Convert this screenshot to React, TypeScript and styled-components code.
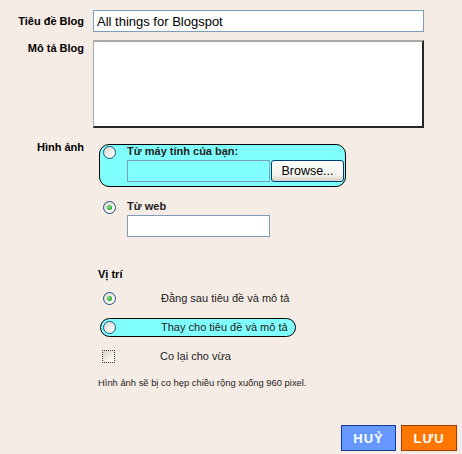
import React from "react";
import styled, { createGlobalStyle } from "styled-components";

const GlobalStyle = createGlobalStyle`
  html, body {
    margin: 0;
    padding: 0;
    background: #f6ece6;
  }
  body {
    font-family: "Liberation Sans", Arial, sans-serif;
    color: #000;
  }
`;

const Page = styled.div`
  width: 462px;
  height: 454px;
  box-sizing: border-box;
  padding-top: 10px;
  display: flex;
  flex-direction: column;
`;

const FieldRow = styled.div<{ $top?: number }>`
  display: flex;
  align-items: ${({ $top }) => ($top !== undefined ? "flex-start" : "center")};
  margin-top: ${({ $top }) => ($top !== undefined ? `${$top}px` : "0")};
`;

const Label = styled.div<{ $offset?: number }>`
  width: 84px;
  flex-shrink: 0;
  margin-right: 9px;
  text-align: right;
  font-size: 11px;
  line-height: 13px;
  font-weight: 700;
  margin-top: ${({ $offset }) => $offset || 0}px;
`;

const TitleInput = styled.input`
  width: 331px;
  height: 22px;
  box-sizing: border-box;
  border: 1px solid #7f9db9;
  padding: 0 3px;
  font-family: "Liberation Sans", Arial, sans-serif;
  font-size: 13px;
  color: #000;
  outline: none;
  background: #fff;
`;

const DescArea = styled.textarea`
  width: 331px;
  height: 88px;
  box-sizing: border-box;
  border-style: solid;
  border-width: 2px 2px 2px 1px;
  border-color: #aca8a4 #262626 #262626 #aca8a4;
  resize: none;
  outline: none;
  background: #fff;
  margin: 0;
`;

const Options = styled.div`
  padding-left: 6px;
  margin-top: 3px;
  display: flex;
  flex-direction: column;
`;

const FileBox = styled.div`
  width: 247px;
  box-sizing: border-box;
  background: #80ffff;
  border: 1px solid #000;
  border-radius: 10px;
  padding: 0 1px 4px 3px;
  display: grid;
  grid-template-columns: 13px 1fr;
  column-gap: 11px;
`;

const WebOption = styled.div`
  margin-top: 13px;
  padding-left: 4px;
  display: grid;
  grid-template-columns: 13px 1fr;
  column-gap: 11px;
`;

const OptionTitle = styled.div`
  font-size: 11px;
  line-height: 13px;
  font-weight: 700;
  color: #222;
`;

const FileRow = styled.div`
  display: flex;
  gap: 1px;
  margin-top: 2px;
`;

const FileField = styled.div<{ $white?: boolean }>`
  width: 143px;
  height: 22px;
  box-sizing: border-box;
  border: 1px solid #7f9db9;
  background: ${({ $white }) => ($white ? "#fff" : "#80ffff")};
`;

const WebField = styled(FileField)`
  margin-top: 2px;
`;

const BrowseButton = styled.button`
  width: 73px;
  height: 22px;
  box-sizing: border-box;
  border: 1px solid #003c74;
  border-radius: 3px;
  background: linear-gradient(#ffffff, #f3f2ec 70%, #d6d0c5);
  font-family: "Liberation Sans", Arial, sans-serif;
  font-size: 12.5px;
  color: #000;
  padding: 0;
`;

const Radio = styled.span<{ $checked?: boolean }>`
  position: relative;
  display: block;
  width: 13px;
  height: 13px;
  box-sizing: border-box;
  border-radius: 50%;
  border: 1px solid #1c5180;
  margin-top: 1px;
  background: linear-gradient(135deg, #d8d5cc 0%, #f4f3ee 60%, #ffffff 100%);

  &::after {
    content: "";
    display: ${({ $checked }) => ($checked ? "block" : "none")};
    position: absolute;
    left: 3px;
    top: 3px;
    width: 5px;
    height: 5px;
    border-radius: 50%;
    background: radial-gradient(circle at 40% 40%, #8fef8f, #21a121 70%);
  }
`;

const RowRadio = styled(Radio)`
  margin-top: 0;
`;

const Checkbox = styled.span`
  display: block;
  width: 13px;
  height: 13px;
  box-sizing: border-box;
  margin-left: -1px;
  border: 1px dotted #4b3a1c;
  background: linear-gradient(135deg, #d6d3ca 0%, #f6f5f0 70%, #fff 100%);
`;

const PositionGroup = styled.div`
  margin-top: 31px;
  padding-left: 98px;
  display: flex;
  flex-direction: column;
`;

const GroupTitle = styled.div`
  font-size: 11px;
  line-height: 13px;
  font-weight: 700;
  margin-bottom: 8px;
`;

const PositionRow = styled.div<{ $pill?: boolean }>`
  display: flex;
  align-items: center;
  width: fit-content;
  height: 19px;
  box-sizing: border-box;
  margin-left: 2px;
  padding: 0 7px 0 2px;
  border: 1px solid ${({ $pill }) => ($pill ? "#000" : "transparent")};
  border-radius: 10px;
  background: ${({ $pill }) => ($pill ? "#80ffff" : "transparent")};
  & + & {
    margin-top: 10px;
  }
`;

const RowText = styled.span`
  margin-left: 45px;
  font-size: 11px;
  line-height: 13px;
  color: #222;
`;

const Note = styled.div`
  margin-top: 11px;
  font-size: 9.4px;
  line-height: 12px;
  color: #222;
`;

const Footer = styled.div`
  margin-top: auto;
  margin-bottom: 3px;
  display: flex;
  justify-content: flex-end;
  gap: 5px;
  padding-right: 5px;
`;

const ActionButton = styled.button<{ $tone: "blue" | "orange" }>`
  width: ${({ $tone }) => ($tone === "blue" ? "55px" : "56px")};
  height: 26px;
  box-sizing: border-box;
  padding: 0;
  border: 1px solid ${({ $tone }) => ($tone === "blue" ? "#0f3a9a" : "#9e3a08")};
  background: ${({ $tone }) => ($tone === "blue" ? "#6699ff" : "#ff7700")};
  color: #fff;
  font-family: "Liberation Sans", Arial, sans-serif;
  font-size: 13px;
  font-weight: 700;
  letter-spacing: 1px;
`;

const positions = [
  { text: "Đằng sau tiêu đề và mô tả", kind: "radio", checked: true },
  { text: "Thay cho tiêu đề và mô tả", kind: "radio", pill: true },
  { text: "Co lại cho vừa", kind: "check" },
];

export default function App() {
  return (
    <>
      <GlobalStyle />
      <Page>
        <FieldRow>
          <Label>Tiêu đề Blog</Label>
          <TitleInput defaultValue="All things for Blogspot" />
        </FieldRow>
        <FieldRow $top={8}>
          <Label $offset={2}>Mô tả Blog</Label>
          <DescArea />
        </FieldRow>
        <FieldRow $top={13}>
          <Label>Hình ảnh</Label>
          <Options>
            <FileBox>
              <Radio />
              <div>
                <OptionTitle>Từ máy tính của bạn:</OptionTitle>
                <FileRow>
                  <FileField />
                  <BrowseButton>Browse...</BrowseButton>
                </FileRow>
              </div>
            </FileBox>
            <WebOption>
              <Radio $checked />
              <div>
                <OptionTitle>Từ web</OptionTitle>
                <WebField $white />
              </div>
            </WebOption>
          </Options>
        </FieldRow>
        <PositionGroup>
          <GroupTitle>Vị trí</GroupTitle>
          {positions.map((p) => (
            <PositionRow key={p.text} $pill={p.pill}>
              {p.kind === "radio" ? <RowRadio $checked={p.checked} /> : <Checkbox />}
              <RowText>{p.text}</RowText>
            </PositionRow>
          ))}
          <Note>Hình ảnh sẽ bị co hẹp chiều rộng xuống 960 pixel.</Note>
        </PositionGroup>
        <Footer>
          <ActionButton $tone="blue">HUỶ</ActionButton>
          <ActionButton $tone="orange">LƯU</ActionButton>
        </Footer>
      </Page>
    </>
  );
}
